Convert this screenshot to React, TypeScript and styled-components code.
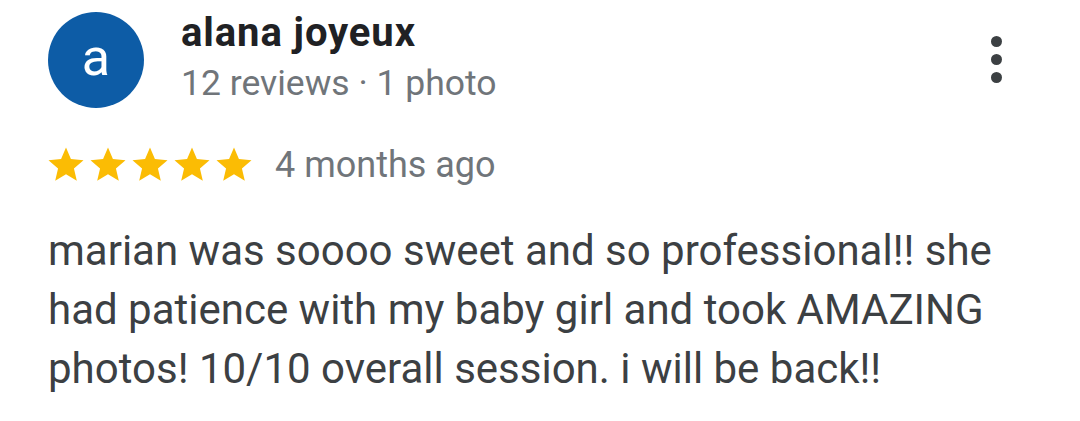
import React from "react";
import styled, { createGlobalStyle } from "styled-components";

const Global = createGlobalStyle`
  html, body { margin: 0; padding: 0; background: #ffffff; }
  body { font-family: Roboto, "Liberation Sans", Arial, sans-serif; }
`;

const Card = styled.div`
  width: 1080px;
  height: 421px;
  box-sizing: border-box;
  padding: 12px 0 0 48px;
  background: #ffffff;
  overflow: hidden;
`;

const Header = styled.div`
  display: flex;
  align-items: flex-start;
`;

const Avatar = styled.div`
  width: 96px;
  height: 96px;
  border-radius: 50%;
  background: #0d5ca6;
  color: #ffffff;
  display: flex;
  align-items: center;
  justify-content: center;
  font-size: 52px;
  line-height: 1;
  padding-bottom: 4px;
  box-sizing: border-box;
  flex: none;
`;

const Info = styled.div`
  margin-left: 37px;
  margin-top: -5px;
  display: flex;
  flex-direction: column;
`;

const Name = styled.div`
  font-size: 40px;
  letter-spacing: 0.9px;
  line-height: 52px;
  font-weight: 700;
  color: #202124;
`;

const Meta = styled.div`
  font-size: 35.5px;
  line-height: 48px;
  color: #70757a;
`;

const Menu = styled.div`
  margin-left: auto;
  margin-right: 78px;
  margin-top: 24px;
  display: flex;
  flex-direction: column;
  gap: 7px;
`;

const Dot = styled.span`
  width: 11px;
  height: 11px;
  border-radius: 50%;
  background: #3c4043;
  display: block;
`;

const RatingRow = styled.div`
  display: flex;
  align-items: center;
  margin-top: 33px;
  height: 48px;
`;

const Stars = styled.div`
  display: flex;
  margin-left: -3px;
  margin-right: 20px;
`;

const Ago = styled.span`
  font-size: 36px;
  color: #70757a;
  line-height: 48px;
`;

const Body = styled.p`
  margin: 32px 0 0 0;
  max-width: 985px;
  font-size: 42px;
  line-height: 59px;
  color: #3c4043;
`;

const Star = () => (
  <svg width="42" height="42" viewBox="0 0 24 24">
    <path
      fill="#fbbc04"
      d="M12 17.27L18.18 21l-1.64-7.03L22 9.24l-7.19-.61L12 2 9.19 8.63 2 9.24l5.46 4.73L5.82 21z"
    />
  </svg>
);

export default function App() {
  return (
    <>
      <Global />
      <Card>
        <Header>
          <Avatar>a</Avatar>
          <Info>
            <Name>alana joyeux</Name>
            <Meta>12 reviews · 1 photo</Meta>
          </Info>
          <Menu>
            <Dot />
            <Dot />
            <Dot />
          </Menu>
        </Header>
        <RatingRow>
          <Stars>
            {[0, 1, 2, 3, 4].map((i) => (
              <Star key={i} />
            ))}
          </Stars>
          <Ago>4 months ago</Ago>
        </RatingRow>
        <Body>
          marian was soooo sweet and so professional!! she had patience with my
          baby girl and took AMAZING photos! 10/10 overall session. i will be
          back!!
        </Body>
      </Card>
    </>
  );
}
